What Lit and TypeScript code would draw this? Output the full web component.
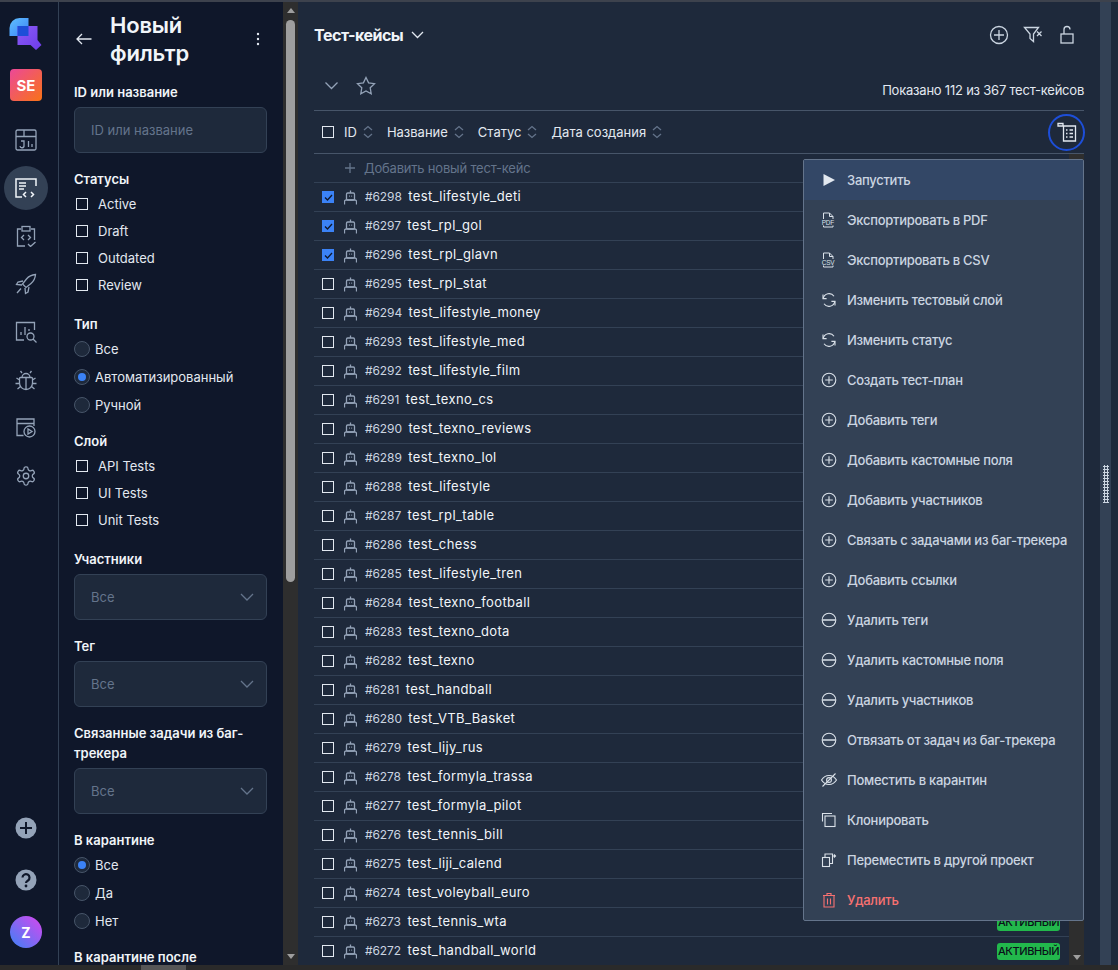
import { LitElement, html, css, svg } from "lit";
import { customElement } from "lit/decorators.js";

const rows: [string, string][] = [
  ["6298", "test_lifestyle_deti"], ["6297", "test_rpl_gol"], ["6296", "test_rpl_glavn"], ["6295", "test_rpl_stat"],
  ["6294", "test_lifestyle_money"], ["6293", "test_lifestyle_med"], ["6292", "test_lifestyle_film"], ["6291", "test_texno_cs"],
  ["6290", "test_texno_reviews"], ["6289", "test_texno_lol"], ["6288", "test_lifestyle"], ["6287", "test_rpl_table"],
  ["6286", "test_chess"], ["6285", "test_lifestyle_tren"], ["6284", "test_texno_football"], ["6283", "test_texno_dota"],
  ["6282", "test_texno"], ["6281", "test_handball"], ["6280", "test_VTB_Basket"], ["6279", "test_lijy_rus"],
  ["6278", "test_formyla_trassa"], ["6277", "test_formyla_pilot"], ["6276", "test_tennis_bill"], ["6275", "test_liji_calend"],
  ["6274", "test_voleyball_euro"], ["6273", "test_tennis_wta"], ["6272", "test_handball_world"],
];

const plus = svg`<circle cx="9" cy="9" r="6.8"/><path d="M9 5.200v7.600M5.200 9h7.600"/>`;
const minus = svg`<circle cx="9" cy="9" r="6.800"/><path d="M2.500 9h13" stroke-width="1.500"/>`;
const sync = svg`<path d="M3.200 7.500A6 6 0 0 1 14 5.200M14.800 10.500A6 6 0 0 1 4 12.800"/><path d="M3 3.600v4h3.600M15 14.400v-4h-3.600"/>`;
const pdf = (t: string) => svg`<path d="M3.500 8V2h6l3.500 3.500V8M9.500 2v3.500H13M3.500 14.500V16h9.500v-1.500" stroke-width="1"/><text x="1.800" y="13.700" font-size="6.400" font-family="Liberation Sans, sans-serif" fill="currentColor" stroke="none">${t}</text>`;

const menu: [string, any, boolean?][] = [
  ["Запустить", svg`<path d="M3.500 3 15 9 3.500 15z" fill="#e2e8f0" stroke="none"/>`],
  ["Экспортировать в PDF", pdf("PDF")],
  ["Экспортировать в CSV", pdf("CSV")],
  ["Изменить тестовый слой", sync],
  ["Изменить статус", sync],
  ["Создать тест-план", plus],
  ["Добавить теги", plus],
  ["Добавить кастомные поля", plus],
  ["Добавить участников", plus],
  ["Связать с задачами из баг-трекера", plus],
  ["Добавить ссылки", plus],
  ["Удалить теги", minus],
  ["Удалить кастомные поля", minus],
  ["Удалить участников", minus],
  ["Отвязать от задач из баг-трекера", minus],
  ["Поместить в карантин", svg`<path d="M1.500 9s2.800-4.500 7.500-4.500S16.500 9 16.500 9s-2.800 4.500-7.500 4.500S1.500 9 1.500 9z"/><circle cx="9" cy="9" r="2.400"/><path d="M2.500 15.500 15.500 2.500"/>`],
  ["Клонировать", svg`<path d="M2.500 10.500V2.500H12"/><rect x="5" y="5" width="10" height="10.500"/>`],
  ["Переместить в другой проект", svg`<rect x="2.500" y="6.500" width="7" height="9"/><path d="M5 6.500V3h7.500v9.500H9.500M12.500 5h3M14 3.500 15.500 5 14 6.500"/>`],
  ["Удалить", svg`<path d="M3 4.500h12M7 4.500V2.500h4v2M4 4.500V16h10V4.500M7.500 7.500v6M10.500 7.500v6"/>`, true],
];

const navIcons = [
  svg`<rect x="1" y="1" width="20" height="20" rx="1.500"/><path d="M1 7.500h20M9 1v6.500M6 12h3v4.500a2 2 0 0 1-4 .5M13.500 12v6M17 15v3"/>`,
  svg`<g stroke-width="1.500"><path d="M21 9V2H1v18h6"/><path d="M4 6h7M4 9h7M4 12h5"/><path d="M11 15l-2.500 2.500L11 20M16 15l2.500 2.500L16 20"/></g>`,
  svg`<path d="M6 4H2.500v17H10M16 4h3.500v11"/><rect x="7" y="1.500" width="8" height="4.500"/><path d="M9 10 6.500 12.500 9 15M13 10l2.500 2.500L13 15M13 19l2.500 2.500 5-4.500"/>`,
  svg`<path d="M20.500 1.500c-4 .3-6.500 1.500-9 4.500L7.500 11l3.500 3.500 5-4c3-2.500 4.200-5 4.500-9zM8 8 3 9l-1.500 2.500 5.500.5M14 14l-1 5-2.500 1.500-.5-5.500M6 15.500 2 20"/>`,
  svg`<path d="M9 19H1.500V1.500h18V9M6 14v-3M10 14V6M14 10V8"/><circle cx="15.500" cy="15.500" r="3.500"/><path d="m18 18 3.500 3.500"/>`,
  svg`<path d="M5.500 8.500h11a1 1 0 0 1 1 1V14a6.500 6.500 0 0 1-13 0V9.500a1 1 0 0 1 1-1zM11 8.500v12M7 8.500a4 4 0 0 1 8 0M7 4 5.500 2M15 4l1.500-2M4.500 11 1.500 9M17.500 11l3-2M.5 14.500h4M17.500 14.500h4M5.500 17.500l-3 2.500M16.500 17.500l3 2.500"/>`,
  svg`<path d="M8.500 18.500H2V2h17v7M2 6.500h17"/><circle cx="14.500" cy="14.500" r="5.500"/><path d="M13 12v5l4-2.500z"/>`,
  svg`<g transform="scale(.917)" stroke-width="1.400"><path d="M12.220 2h-.44a2 2 0 0 0-2 2v.18a2 2 0 0 1-1 1.730l-.43.25a2 2 0 0 1-2 0l-.15-.08a2 2 0 0 0-2.730.730l-.22.380a2 2 0 0 0 .730 2.730l.15.100a2 2 0 0 1 1 1.720v.510a2 2 0 0 1-1 1.740l-.15.090a2 2 0 0 0-.730 2.730l.22.380a2 2 0 0 0 2.730.730l.15-.08a2 2 0 0 1 2 0l.43.25a2 2 0 0 1 1 1.730V20a2 2 0 0 0 2 2h.44a2 2 0 0 0 2-2v-.18a2 2 0 0 1 1-1.730l.43-.25a2 2 0 0 1 2 0l.15.08a2 2 0 0 0 2.730-.730l.22-.390a2 2 0 0 0-.730-2.730l-.15-.08a2 2 0 0 1-1-1.740v-.5a2 2 0 0 1 1-1.740l.15-.090a2 2 0 0 0 .730-2.730l-.22-.380a2 2 0 0 0-2.730-.730l-.15.08a2 2 0 0 1-2 0l-.43-.25a2 2 0 0 1-1-1.730V4a2 2 0 0 0-2-2z"/><circle cx="12" cy="12" r="3"/></g>`,
];

@customElement("app-root")
export class AppRoot extends LitElement {
  static styles = css`
    :host { display: block; font-family: Inter, "Noto Sans", sans-serif; }
    * { box-sizing: border-box; }
    .root { position: relative; height: 970px; width: 1118px; overflow: hidden; display: flex; flex-direction: column; background: #1e293b; color: #e2e8f0; }
    .top { height: 2px; background: #3d424d; flex: none; }
    .body { flex: 1; display: flex; min-height: 0; }
    .hbar { height: 5px; flex: none; background: #2a2a2a; display: flex; padding-left: 141px; }
    .hthumb { width: 45px; background: #565656; }
    svg { display: block; fill: none; stroke: currentColor; stroke-width: 1.3; flex: none; }

    .nav { width: 59px; flex: none; background: #0f172a; border-right: 1px solid #334155; display: flex; flex-direction: column; align-items: center; padding: 15px 6px 17px 0; color: #94a3b8; }
    .logo { width: 34px; height: 34px; }
    .se { width: 32px; height: 32px; margin-top: 18px; border-radius: 4px; background: linear-gradient(135deg, #ec4899, #f97316); color: #fff; font-weight: 700; font-size: 15px; display: flex; align-items: center; justify-content: center; margin-bottom: 15px; }
    .ni { width: 44px; height: 48px; display: flex; align-items: center; justify-content: center; }
    .ni.active { height: 44px; margin: 2px 0; border-radius: 50%; background: #334155; color: #f1f5f9; }
    .grow { flex: 1; }
    .bot { width: 32px; height: 52px; display: flex; align-items: center; justify-content: center; }
    .avatar { width: 32px; height: 32px; border-radius: 50%; background: linear-gradient(45deg, #3b82f6, #d946ef); color: #fff; font-weight: 700; font-size: 14px; display: flex; align-items: center; justify-content: center; margin-top: 10px; }

    .filter { width: 224px; flex: none; background: #0f172a; padding: 9px 16px 0 15px; overflow: hidden; }
    .fhead { display: flex; align-items: center; height: 56px; margin-bottom: 15px; padding-left: 2px; }
    .fhead h1 { margin: 0 0 0 18px; font-size: 22px; line-height: 28px; font-weight: 600; color: #f1f5f9; flex: 1; width: 120px; letter-spacing: -.2px; }
    .label { font-size: 13px; line-height: 20px; font-weight: 600; color: #f1f5f9; }
    .field { height: 46px; margin-top: 5px; border-radius: 6px; background: #1e293b; border: 1px solid #334155; font-size: 13px; color: #64748b; display: flex; align-items: center; justify-content: space-between; padding: 0 12px 0 16px; }
    .sec { margin-bottom: 16px; }
    .sec.tight { margin-bottom: 12px; }
    .chk { display: flex; align-items: center; height: 27px; padding-left: 2px; font-size: 13px; color: #e2e8f0; gap: 10px; }
    .label + .chk, .label + .rad { margin-top: 1px; }
    .box { width: 12px; height: 12px; border: 1.5px solid #e2e8f0; flex: none; }
    .rad { display: flex; align-items: center; height: 28px; font-size: 13px; color: #e2e8f0; gap: 5px; }
    .circle { width: 16px; height: 16px; border-radius: 50%; background: #1e293b; border: 1px solid #475569; flex: none; display: flex; align-items: center; justify-content: center; }
    .circle.on::after { content: ""; width: 8px; height: 8px; border-radius: 50%; background: #3b82f6; }

    .vbar { width: 15px; flex: none; background: #2e2e2e; display: flex; flex-direction: column; align-items: center; justify-content: space-between; padding: 6px 0; position: relative; }
    .thumb { position: absolute; left: 3px; top: 18px; width: 9px; height: 562px; background: #9e9e9e; border-radius: 5px; }
    .up { width: 0; height: 0; border: 4.5px solid transparent; border-top: 0; border-bottom: 5px solid #9e9e9e; }
    .down { width: 0; height: 0; border: 4.5px solid transparent; border-bottom: 0; border-top: 5px solid #9e9e9e; }

    .main { flex: 1; min-width: 0; padding: 0 16px; display: flex; flex-direction: column; position: relative; }
    .title { height: 66px; flex: none; display: flex; align-items: center; }
    .title b { font-size: 16px; font-weight: 700; color: #f1f5f9; letter-spacing: -.5px; }
    .title .acts { margin-left: auto; display: flex; gap: 14px; color: #cbd5e1; padding-right: 7px; }
    .bar { height: 43px; flex: none; border-bottom: 1px solid #475569; display: flex; align-items: center; padding: 0 0 8px 10px; gap: 17px; color: #94a3b8; }
    .count { margin-left: auto; font-size: 13px; color: #e2e8f0; padding-top: 10px; letter-spacing: -.22px; }
    .head { height: 43px; flex: none; border-bottom: 1px solid #475569; display: flex; align-items: center; padding-left: 8px; font-size: 13px; color: #e2e8f0; }
    .head .box { margin-right: 10px; }
    .sort { display: flex; align-items: center; gap: 6px; margin-right: 14px; }
    .sort svg { color: #64748b; }
    .ring { margin-left: auto; margin-right: -1px; width: 37px; height: 37px; border-radius: 50%; border: 2px solid #1d4ed8; display: flex; align-items: center; justify-content: center; color: #e2e8f0; }
    .lower { flex: 1; min-height: 0; display: flex; }
    .list { flex: 1; min-width: 0; overflow: hidden; }
    .add { height: 29px; border-bottom: 1px solid #334155; display: flex; align-items: center; gap: 8px; padding-left: 30px; font-size: 13px; letter-spacing: -.2px; color: #64748b; }
    .row { height: 29px; border-bottom: 1px solid #334155; display: flex; align-items: center; padding-left: 8px; }
    .row .box.on { background: #3b82f6; border: none; display: flex; align-items: center; justify-content: center; color: #0f172a; }
    .robot { margin-left: 10px; color: #94a3b8; }
    .rid { margin: 0 0 2px 8px; font-size: 12px; color: #cbd5e1; letter-spacing: -.1px; }
    .rname { margin: 0 0 2px 6.500px; font-size: 13px; color: #f1f5f9; letter-spacing: .37px; }
    .badge { margin-left: auto; margin-right: 9px; width: 63px; height: 17px; border-radius: 3px; background: #22b84c; color: #0a0f1a; font-size: 11px; letter-spacing: -.4px; font-weight: 500; display: flex; align-items: center; justify-content: center; }
    .mbar { width: 15px; flex: none; background: #2e2e2e; display: flex; flex-direction: column; justify-content: flex-end; align-items: center; padding-bottom: 5px; }

    .menu { position: absolute; left: 505px; top: 157px; width: 281px; height: 762px; background: #334155; border: 1px solid #64748b; border-radius: 2px; }
    .mi { height: 40px; display: flex; align-items: center; padding-left: 16px; gap: 9px; font-size: 13px; letter-spacing: -.27px; color: #cbd5e1; font-weight: 500; white-space: nowrap; }
    .mi svg { color: #dbe2ea; stroke-width: 1.100; }
    .mi.hl { background: #334766; }
    .mi.red { color: #f87171; }
    .mi.red svg { color: #f87171; }

    .split { width: 11px; flex: none; background: #334155; display: flex; align-items: center; justify-content: center; }
    .grip { width: 6px; height: 38px; background-image: radial-gradient(circle, #cbd5e1 1px, transparent 1.1px); background-size: 3px 3px; }
    .edge { width: 7px; flex: none; background: #1e293b; }
  `;

  private chk(t: string) { return html`<div class="chk"><span class="box"></span>${t}</div>`; }
  private rad(t: string, on = false) { return html`<div class="rad"><span class="circle ${on ? "on" : ""}"></span>${t}</div>`; }
  private sel() {
    return html`<div class="field"><span>Все</span><svg width="14" height="8" viewBox="0 0 14 8" style="color:#64748b"><path d="m1 1 6 6 6-6"/></svg></div>`;
  }
  private sort(t: string) {
    return html`<div class="sort">${t}<svg width="10" height="14" viewBox="0 0 10 14"><path d="m1 5 4-3.500L9 5M1 9l4 3.500L9 9"/></svg></div>`;
  }

  render() {
    return html`<div class="root">
      <div class="top"></div>
      <div class="body">
        <nav class="nav">
          <svg class="logo" viewBox="0 0 34 34" style="stroke:none">
            <defs>
              <linearGradient id="lg1" x1="0" y1="0" x2="1" y2="1"><stop offset="0" stop-color="#60c0ff"/><stop offset="1" stop-color="#3b82f6"/></linearGradient>
              <linearGradient id="lg2" x1="0" y1="0" x2="1" y2="1"><stop offset="0" stop-color="#8b5cf6"/><stop offset="1" stop-color="#6d3be8"/></linearGradient>
            </defs>
            <path d="M.5 11a10 10 0 0 1 10-10h9v18H.5z" fill="url(#lg1)"/>
            <path d="M8.500 9h20v14l4 5-5.500 5-5.500-5H8.500z" fill="url(#lg2)"/>
            <rect x="8.500" y="9" width="11" height="10" fill="#1d4ed8"/>
          </svg>
          <div class="se">SE</div>
          ${navIcons.map((ic, i) => html`<div class="ni ${i === 1 ? "active" : ""}"><svg width="22" height="22" viewBox="0 0 22 22">${ic}</svg></div>`)}
          <div class="grow"></div>
          <div class="bot"><svg width="22" height="22" viewBox="0 0 22 22" style="stroke:none"><circle cx="11" cy="11" r="10.500" fill="#94a3b8"/><path d="M11 5v12M5 11h12" stroke="#0f172a" stroke-width="2"/></svg></div>
          <div class="bot"><svg width="22" height="22" viewBox="0 0 22 22" style="stroke:none"><circle cx="11" cy="11" r="10.500" fill="#94a3b8"/><path d="M7.500 8.500a3.500 3.500 0 1 1 5.500 3c-1.300.8-2 1.300-2 2.500" stroke="#0f172a" stroke-width="2.200" fill="none"/><circle cx="11" cy="17" r="1.400" fill="#0f172a"/></svg></div>
          <div class="avatar">Z</div>
        </nav>
        <aside class="filter">
          <div class="fhead">
            <svg width="16" height="12" viewBox="0 0 16 12" stroke-width="1" style="color:#e2e8f0"><path d="M15.500 6H1M6 1 1 6l5 5"/></svg>
            <h1>Новый фильтр</h1>
            <svg width="4" height="14" viewBox="0 0 4 14" style="stroke:none;margin-right:7px"><g fill="#e2e8f0"><circle cx="2" cy="2" r="1.200"/><circle cx="2" cy="7" r="1.200"/><circle cx="2" cy="12" r="1.200"/></g></svg>
          </div>
          <div class="sec"><div class="label">ID или название</div><div class="field">ID или название</div></div>
          <div class="sec"><div class="label">Статусы</div>${["Active", "Draft", "Outdated", "Review"].map((t) => this.chk(t))}</div>
          <div class="sec tight"><div class="label">Тип</div>${this.rad("Все")}${this.rad("Автоматизированный", true)}${this.rad("Ручной")}</div>
          <div class="sec"><div class="label">Слой</div>${["API Tests", "UI Tests", "Unit Tests"].map((t) => this.chk(t))}</div>
          <div class="sec"><div class="label">Участники</div>${this.sel()}</div>
          <div class="sec"><div class="label">Тег</div>${this.sel()}</div>
          <div class="sec"><div class="label">Связанные задачи из баг-трекера</div>${this.sel()}</div>
          <div class="sec tight"><div class="label">В карантине</div>${this.rad("Все", true)}${this.rad("Да")}${this.rad("Нет")}</div>
          <div class="sec"><div class="label">В карантине после</div></div>
        </aside>
        <div class="vbar"><span class="up"></span><div class="thumb"></div><span class="down"></span></div>
        <main class="main">
          <div class="title">
            <b>Тест-кейсы</b>
            <svg width="13" height="8" viewBox="0 0 13 8" style="margin-left:8px;color:#e2e8f0"><path d="m1 1 5.500 5.500L12 1"/></svg>
            <div class="acts">
              <svg width="20" height="20" viewBox="0 0 20 20"><circle cx="10" cy="10" r="8.500"/><path d="M10 5v10M5 10h10"/></svg>
              <svg width="20" height="20" viewBox="0 0 20 20"><path d="M1.500 2.500h14L10.500 9v7.500l-3.500-3V9zM14 6.500l4.500 4.500M18.500 6.500 14 11"/></svg>
              <svg width="20" height="20" viewBox="0 0 20 20"><rect x="4" y="9" width="12" height="9"/><path d="M7 9V4.500a3 3 0 0 1 6 0"/></svg>
            </div>
          </div>
          <div class="bar">
            <svg width="15" height="9" viewBox="0 0 15 9"><path d="m1.500 1.500 6 6 6-6"/></svg>
            <svg width="20" height="19" viewBox="0 0 20 19"><path d="m10 1.500 2.600 5.400 5.900.8-4.300 4.100 1 5.900-5.200-2.800-5.200 2.800 1-5.900L1.500 7.700l5.900-.8z"/></svg>
            <span class="count">Показано 112 из 367 тест-кейсов</span>
          </div>
          <div class="head">
            <span class="box"></span>
            ${this.sort("ID")}${this.sort("Название")}${this.sort("Статус")}${this.sort("Дата создания")}
            <div class="ring"><svg width="20" height="20" viewBox="0 0 20 20" stroke-width="1.100"><path d="M6 3.500V1.500H1v2.500h17.500v15H6.500V4"/><path d="M9 8h1.500M12.500 8H16M9 11.500h1.500M12.500 11.500H16M9 15h1.500M12.500 15H16" stroke-width="1.400"/></svg></div>
          </div>
          <div class="lower">
            <div class="list">
              <div class="add"><svg width="12" height="12" viewBox="0 0 12 12" stroke-width="1.500"><path d="M6 1v10M1 6h10"/></svg>Добавить новый тест-кейс</div>
              ${rows.map(([id, name], i) => html`<div class="row">
                <span class="box ${i < 3 ? "on" : ""}">${i < 3 ? html`<svg width="9" height="7" viewBox="0 0 9 7" stroke-width="1.500"><path d="m1 3.500 2.500 2.500L8 1"/></svg>` : ""}</span>
                <svg class="robot" width="13" height="15" viewBox="0 0 13 15" stroke-width="1"><rect x="2.500" y="3" width="8" height="7" rx="1.200"/><path d="M6.500 .5V3M.5 14.500v-3A1.500 1.500 0 0 1 2 10h9a1.500 1.500 0 0 1 1.500 1.500v3M5 6.200h.8M7.300 6.200h.8"/></svg>
                <span class="rid">#${id}</span><span class="rname">${name}</span>
                ${i >= rows.length - 2 ? html`<span class="badge">АКТИВНЫЙ</span>` : ""}
              </div>`)}
            </div>
            <div class="mbar"><span class="down"></span></div>
          </div>
          <div class="menu">
            ${menu.map(([t, ic, red], i) => html`<div class="mi ${i === 0 ? "hl" : ""} ${red ? "red" : ""}"><svg width="18" height="18" viewBox="0 0 18 18">${ic}</svg>${t}</div>`)}
          </div>
        </main>
        <div class="split"><div class="grip"></div></div>
        <div class="edge"></div>
      </div>
      <div class="hbar"><div class="hthumb"></div></div>
    </div>`;
  }
}
